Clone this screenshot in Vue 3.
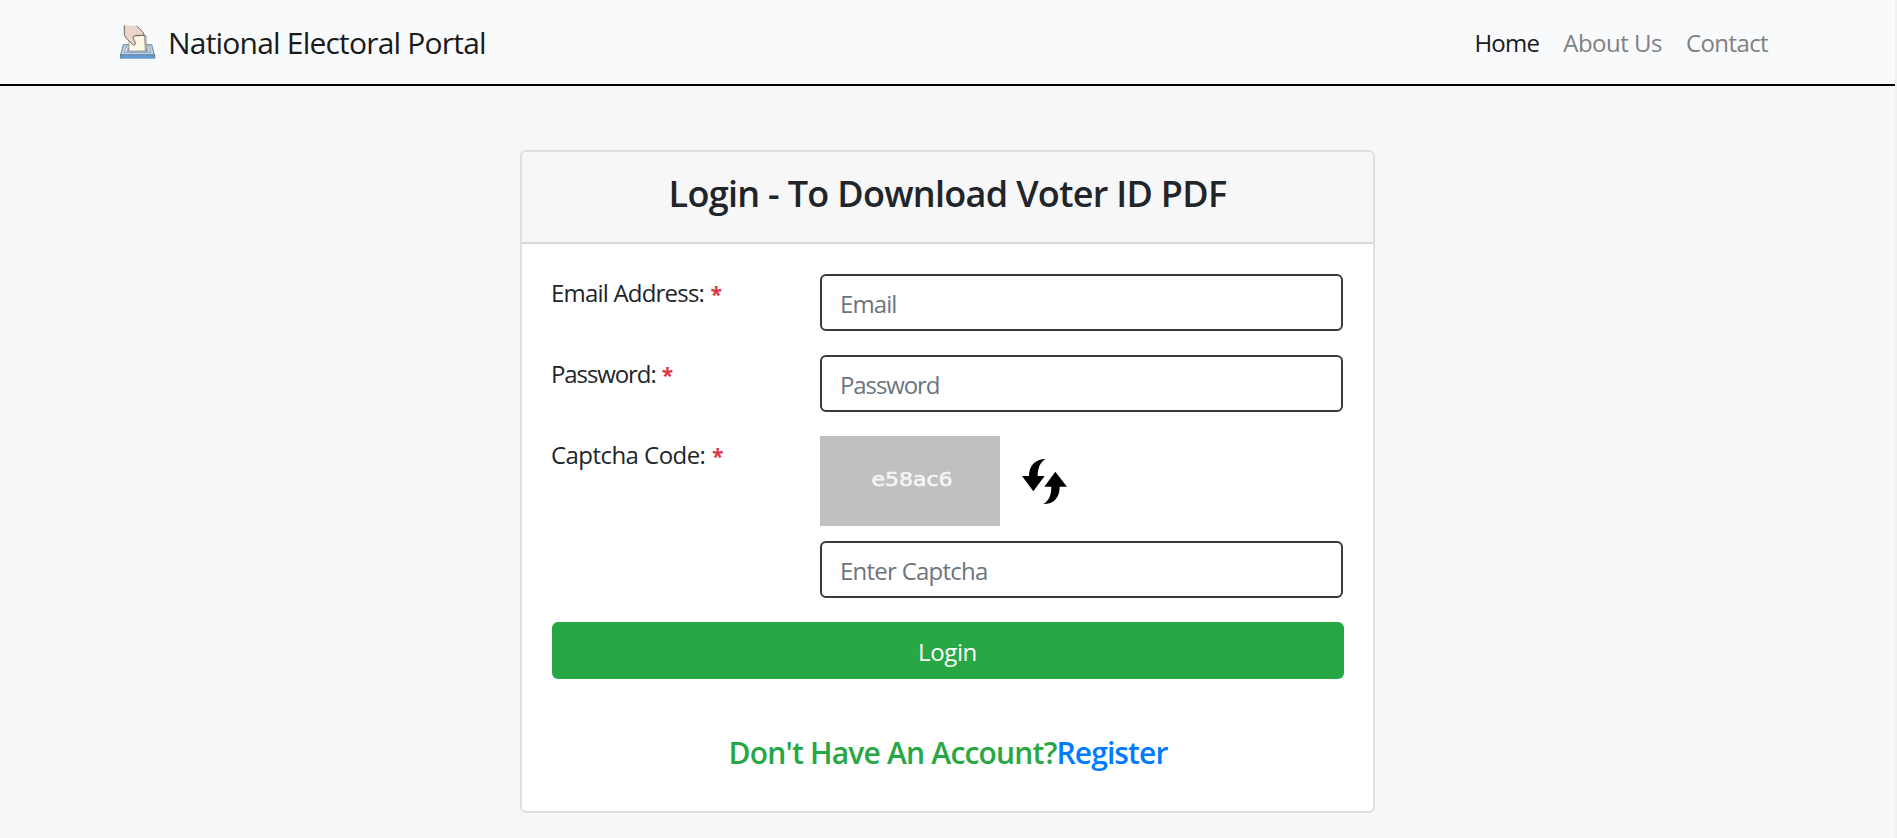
<script setup>
const links = [
  { label: 'Home', cls: 'home active' },
  { label: 'About Us', cls: 'about' },
  { label: 'Contact', cls: 'contact' },
]
</script>

<template>
  <div class="page">
    <header class="navbar">
      <a class="brand">
        <svg class="logo" viewBox="30 30 108 108" aria-hidden="true">
          <path d="M40 89H125L134 123H31Z" fill="#b9d3ea" stroke="#65707d" stroke-width="2.5" />
          <path d="M48 95H117L122 112H43Z" fill="#dce9f4" stroke="#71889e" stroke-width="2" />
          <path d="M53 99H113L116 110H49Z" fill="#8eabc5" />
          <path d="M31 119H134V131H31Z" fill="#659bd0" />
          <path d="M31 119H134M31 119V131M134 119V131" fill="none" stroke="#52677e" stroke-width="2" />
          <path d="M100 61L108 62L110 107H104Z" fill="#c9c4b8" stroke="#77736b" stroke-width="1.5" />
          <path d="M57 65L103 61L106 108H57Z" fill="#fdf8e6" stroke="#89857a" stroke-width="2" />
          <path d="M43 31V57C44 68 51 72 57 77L67 88C72 94 79 88 75 81L68 67L77 61H103C101 51 91 44 80 33Z" fill="#ead5c8" />
          <path d="M43 31V57C44 68 51 72 57 77L67 88C72 94 79 88 75 81L68 67L77 61H103C101 51 91 44 80 33" fill="none" stroke="#554c4c" stroke-width="2.5" />
        </svg>
        <span class="brand-name">National Electoral Portal</span>
      </a>
      <nav class="links">
        <a v-for="l in links" :key="l.label" :class="['link', l.cls]">{{ l.label }}</a>
      </nav>
    </header>

    <main class="card">
      <div class="card-header"><h4>Login - To Download Voter ID PDF</h4></div>
      <form class="card-body" @submit.prevent>
        <div class="row">
          <label class="email-label">Email Address: <b>*</b></label>
          <input class="field email" type="text" placeholder="Email" />
        </div>
        <div class="row">
          <label class="pass-label">Password: <b>*</b></label>
          <input class="field pass" type="password" placeholder="Password" />
        </div>
        <div class="row">
          <label class="code-label">Captcha Code: <b>*</b></label>
          <div class="captcha">
            <div class="captcha-top">
              <div class="captcha-image"><span>e58ac6</span></div>
              <svg class="refresh" viewBox="30 36 147 147" aria-hidden="true">
                <path d="M107 42C76 42 57 62 57 93H36L70 139L104 93H83C83 70 90 52 107 42Z" />
                <path d="M136 80L171 125H149C149 158 132 177 100 177C117 166 124 150 124 125H103Z" />
              </svg>
            </div>
            <input class="field code" type="text" placeholder="Enter Captcha" />
          </div>
        </div>
        <button class="submit" type="submit"><span>Login</span></button>
        <h5><span class="question">Don't Have An Account?</span><a class="register">Register</a></h5>
      </form>
    </main>
  </div>
</template>

<style>
body {
  margin: 0;
  background: #f0f0f0;
}
</style>

<style scoped>
* {
  box-sizing: border-box;
}
.page {
  width: 1895px;
  height: 838px;
  overflow: hidden;
  background: #f7f7f7;
  color: #212529;
  font-family: "Open Sans", "Noto Sans", sans-serif;
  font-size: 24px;
  line-height: 36px;
}
.navbar {
  display: flex;
  align-items: center;
  justify-content: space-between;
  height: 86px;
  padding: 0 127px 0 120px;
  background: #f8fafc;
  border-bottom: 2px solid #000;
}
.brand {
  display: flex;
  align-items: center;
  gap: 12px;
}
.logo {
  width: 36px;
  height: 36px;
  margin-top: 2px;
}
.brand-name {
  font-size: 30px;
  line-height: 45px;
  letter-spacing: -0.8px;
  color: #1a1a1a;
  white-space: nowrap;
}
.links {
  display: flex;
  gap: 24px;
  padding-top: 1px;
}
.link {
  color: #808182;
  letter-spacing: -0.5px;
  white-space: nowrap;
}
.link.contact {
  letter-spacing: -0.6px;
}
.link.active {
  color: #1a1a1a;
  letter-spacing: -0.75px;
}
.card {
  width: 855px;
  height: 663px;
  margin: 64px 0 0 520px;
  background: #fff;
  border: 2px solid #dfdfdf;
  border-radius: 6px;
  overflow: hidden;
}
.card-header {
  height: 92px;
  padding: 20px 0 0;
  background: #f7f7f7;
  border-bottom: 2px solid #d8d8d8;
  text-align: center;
}
h4 {
  margin: 0;
  font-size: 36px;
  font-weight: 600;
  line-height: 43px;
  letter-spacing: -0.7px;
}
.card-body {
  padding: 30px 29px 0 30px;
}
.row {
  display: grid;
  grid-template-columns: 268px 523px;
  margin-bottom: 24px;
}
label {
  margin-left: -1px;
  padding-top: 1px;
  white-space: nowrap;
}
.email-label {
  letter-spacing: -0.8px;
}
.pass-label {
  letter-spacing: -1.1px;
}
.code-label {
  letter-spacing: -0.55px;
}
label b {
  margin-left: 1px;
  color: #dc3545;
  font-size: 21px;
}
.field {
  display: block;
  width: 523px;
  height: 57px;
  padding: 1px 19px 0 18px;
  border: 2px solid #343a40;
  border-radius: 6px;
  background: #fff;
  font: inherit;
}
.email {
  letter-spacing: -0.9px;
}
.pass {
  letter-spacing: -1.1px;
}
.code {
  letter-spacing: -0.75px;
}
.field::placeholder {
  color: #6c757d;
  opacity: 1;
}
.captcha-top {
  display: flex;
  gap: 20px;
  height: 105px;
}
.captcha-image {
  display: flex;
  justify-content: center;
  width: 180px;
  height: 90px;
  padding-top: 25px;
  background: #c0c0c0;
  color: #f5f5f5;
  font-family: "DejaVu Sans", sans-serif;
  font-size: 19px;
  -webkit-text-stroke: 0.6px #f5f5f5;
}
.captcha-image span {
  transform: translateX(2px) scaleX(1.16);
}
.refresh {
  width: 49px;
  height: 49px;
  margin-top: 21px;
}
.submit {
  display: block;
  width: 792px;
  height: 57px;
  padding: 2px 1px 0 0;
  border: 0;
  border-radius: 6px;
  background: #28a745;
  color: #fff;
  font: inherit;
  letter-spacing: -0.4px;
}
h5 {
  margin: 56px 0 0;
  font-size: 30px;
  font-weight: 600;
  line-height: 36px;
  text-align: center;
}
.question {
  color: #28a745;
  letter-spacing: -0.8px;
}
.register {
  color: #007bff;
  letter-spacing: -0.9px;
}
</style>
